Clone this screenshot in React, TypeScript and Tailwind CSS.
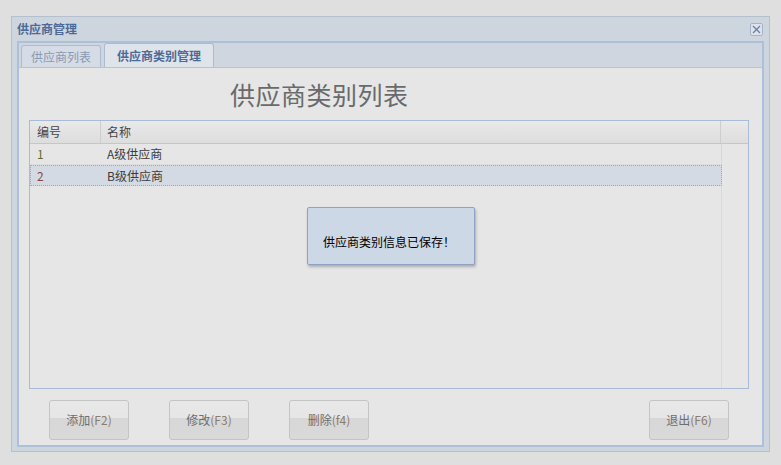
import React from 'react';

const font = { fontFamily: '"Noto Sans CJK SC", "Liberation Sans", sans-serif' };

const rows = [
  { id: '1', name: 'A级供应商', idColor: 'text-[#5f6e2e]' },
  { id: '2', name: 'B级供应商', idColor: 'text-[#8a4a3a]' },
];

const buttons = [
  { label: '添加', key: '(F2)' },
  { label: '修改', key: '(F3)' },
  { label: '删除', key: '(f4)' },
];

const ActionButton: React.FC<{ label: string; hotkey: string }> = ({ label, hotkey }) => (
  <button className="w-[80px] h-[40px] rounded-[3px] border border-[#c4c4c4] bg-[linear-gradient(#e8e8e8_0%,#e6e6e6_45%,#d7d7d7_46%,#d9d9d9_100%)] text-[12px] text-[#6e6e6e] flex items-center justify-center">
    <span>{label}</span>
    <span className="text-[#8c7c6a]">{hotkey}</span>
  </button>
);

export default function App() {
  return (
    <div className="w-[781px] h-[465px] bg-[#dfdfdf] pt-[16px] pl-[11px] text-[12px]" style={font}>
      <div className="w-[759px] h-[436px] border border-[#b5c0ce] bg-[#cdd5df] flex flex-col relative">
        {/* title bar */}
        <div className="h-[24px] flex items-center justify-between pl-[5px] pr-[6px] shrink-0">
          <span className="font-bold text-[#4d6a97] text-[12px]">供应商管理</span>
          <div className="w-[13px] h-[13px] border border-[#a7b4c8] bg-[#dde3ec] rounded-[2px] flex items-center justify-center">
            <svg width="9" height="9" viewBox="0 0 9 9">
              <path d="M1 1L8 8M8 1L1 8" stroke="#6c7fa3" strokeWidth="1.3" />
            </svg>
          </div>
        </div>

        {/* inner panel */}
        <div className="ml-[5px] w-[747px] h-[406px] border-2 border-[#adc0da] bg-[#e6e6e6] flex flex-col">
          {/* tab strip */}
          <div className="h-[25px] bg-[#cfd6e0] border-b border-[#b3c3da] flex items-end pl-[2px] gap-[3px] shrink-0">
            <div className="h-[22px] w-[80px] border border-b-0 border-[#aebcd0] rounded-t-[3px] bg-[#d6dce5] flex items-center justify-center text-[#8a9ab3] text-[12px]">
              供应商列表
            </div>
            <div className="h-[24px] w-[110px] border border-b-0 border-[#aebcd0] rounded-t-[3px] bg-[#dfe4eb] flex items-center justify-center font-bold text-[#4d6a97] text-[12px]">
              供应商类别管理
            </div>
          </div>

          {/* body */}
          <div className="flex-1 flex flex-col px-[10px]">
            <div className="h-[52px] flex items-center pl-[201px] text-[25px] text-[#6a6a6a] leading-none tracking-[0.5px]">
              供应商类别列表
            </div>

            <div className="w-[720px] h-[269px] border border-[#a9bcd6] bg-[#e6e6e6] flex flex-col">
              <div className="h-[23px] flex bg-[linear-gradient(#e9e9e9,#dddddd)] border-b border-[#c6c6c6] text-[#444]">
                <div className="w-[71px] border-r border-[#cdcdcd] pl-[7px] flex items-center">编号</div>
                <div className="w-[620px] border-r border-[#cdcdcd] pl-[6px] flex items-center">名称</div>
                <div className="flex-1" />
              </div>
              <div className="flex-1 flex flex-col">
                {rows.map((r, i) => (
                  <div
                    key={r.id}
                    className={`w-[692px] h-[21px] flex items-center border-r border-[#d8d8d8] ${
                      i === 1
                        ? 'bg-[#d4dae3] outline-1 outline-dotted outline-[#9fa8b8] -outline-offset-1'
                        : 'border-b border-b-[#dcdcdc]'
                    }`}
                  >
                    <div className={`w-[71px] pl-[7px] ${r.idColor}`}>{r.id}</div>
                    <div className="pl-[6px] text-[#3c3c3c]">{r.name}</div>
                  </div>
                ))}
                <div className="w-[692px] flex-1 border-r border-[#dadada]" />
              </div>
            </div>

            <div className="flex items-center justify-between pl-[20px] pr-[23px] pt-[11px]">
              <div className="flex gap-[40px]">
                {buttons.map(b => (
                  <ActionButton key={b.label} label={b.label} hotkey={b.key} />
                ))}
              </div>
              <ActionButton label="退出" hotkey="(F6)" />
            </div>
          </div>
        </div>

        {/* message dialog */}
        <div className="absolute left-[295px] top-[190px] w-[168px] h-[58px] bg-[#cdd8e7] border border-[#8fa2c1] rounded-[2px] shadow-[1px_2px_3px_rgba(0,0,0,0.25)] flex items-center pl-[15px] pt-[12px] text-[12px] text-black">
          供应商类别信息已保存！
        </div>
      </div>
    </div>
  );
}
